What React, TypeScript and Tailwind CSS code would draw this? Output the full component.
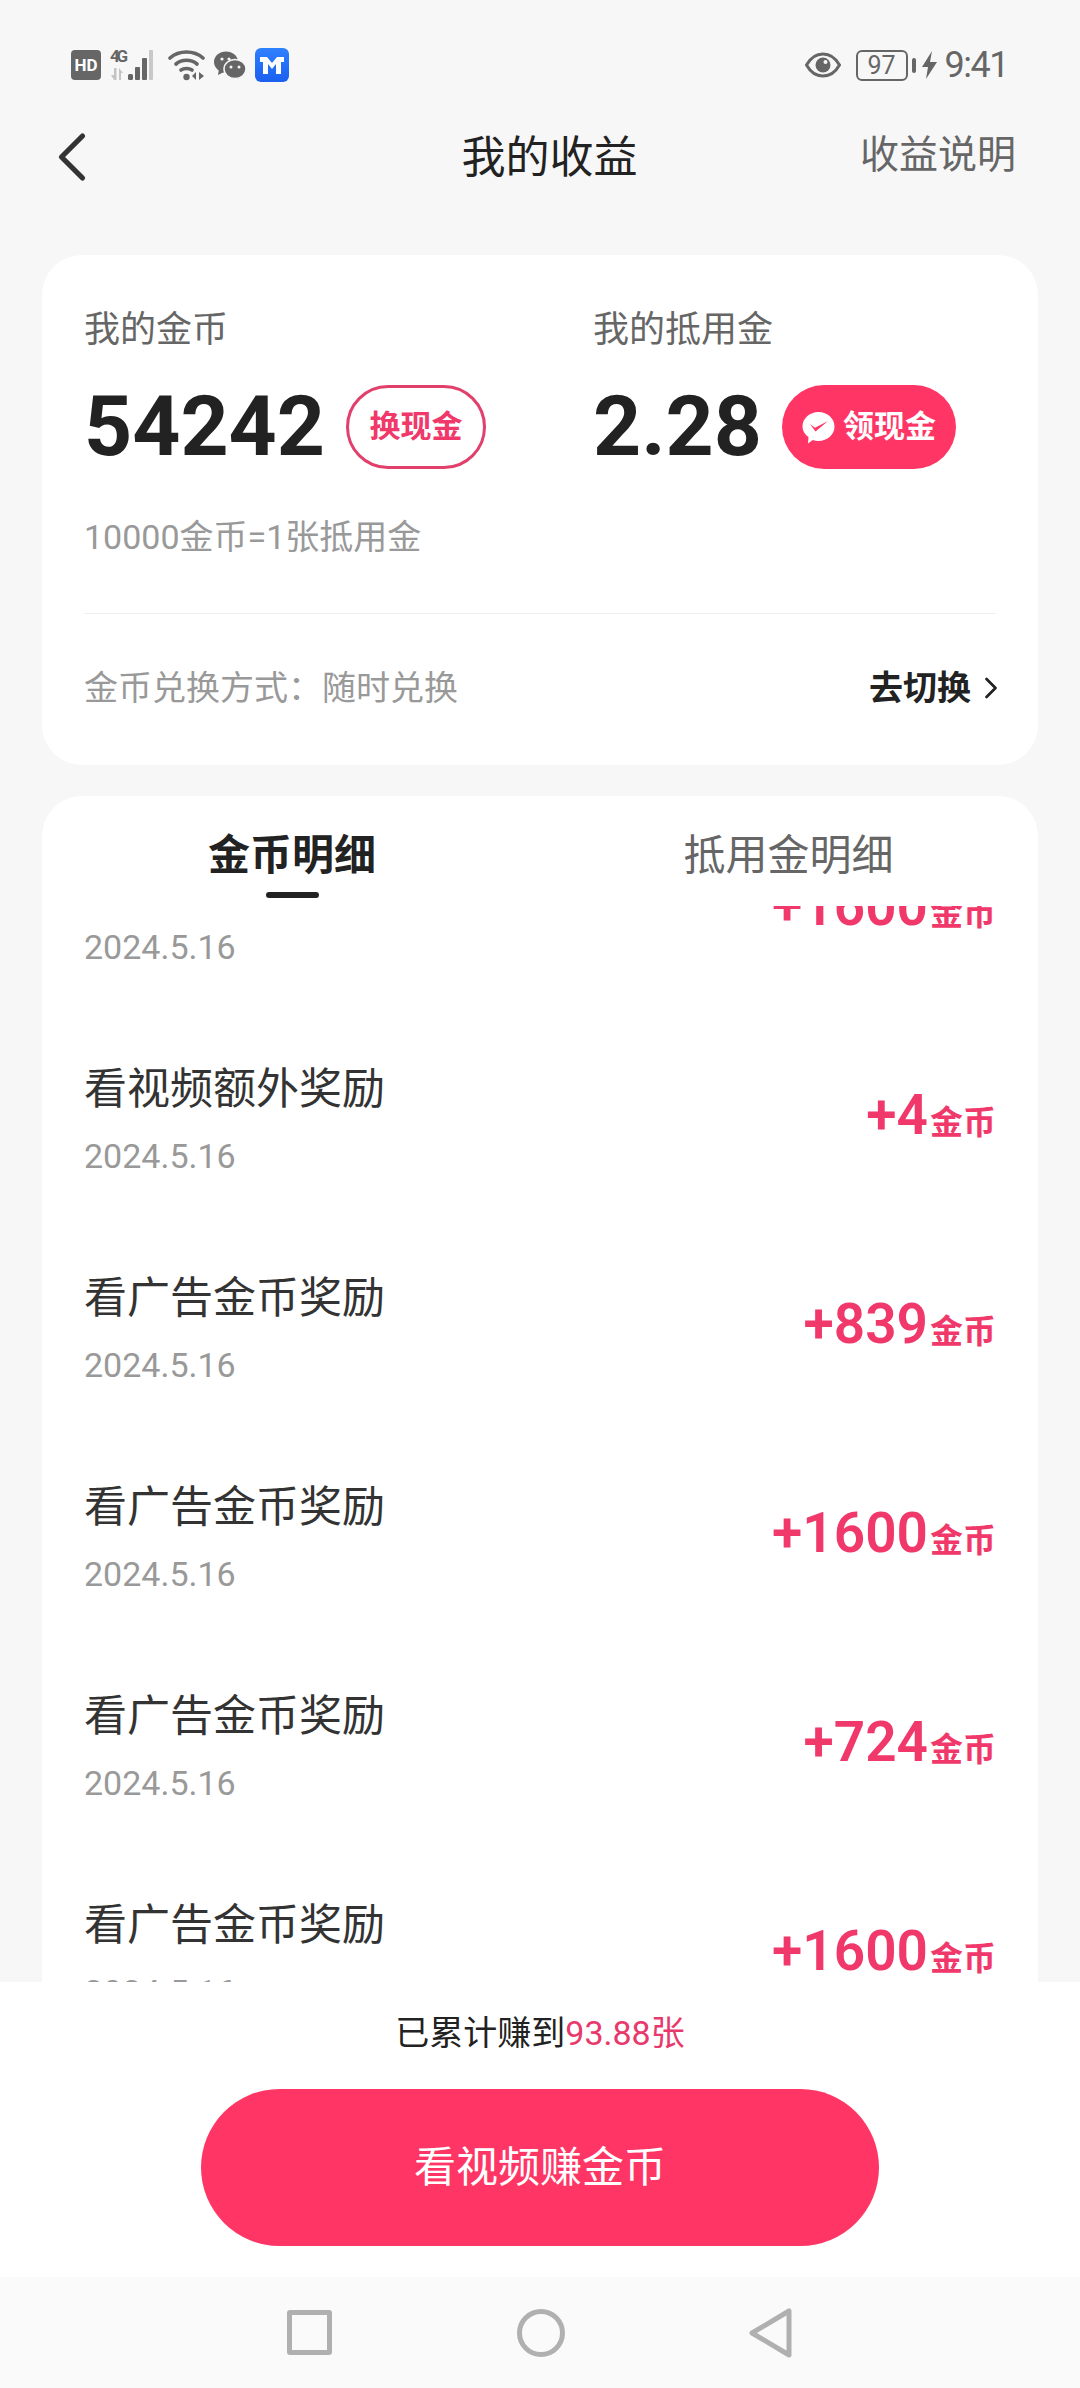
import { ChevronLeft, ChevronRight } from 'lucide-react';

const rows = [
  { title: '看广告金币奖励', date: '2024.5.16', amount: '+1600' },
  { title: '看视频额外奖励', date: '2024.5.16', amount: '+4' },
  { title: '看广告金币奖励', date: '2024.5.16', amount: '+839' },
  { title: '看广告金币奖励', date: '2024.5.16', amount: '+1600' },
  { title: '看广告金币奖励', date: '2024.5.16', amount: '+724' },
  { title: '看广告金币奖励', date: '2024.5.16', amount: '+1600' },
];

const StatusLeft = () => (
  <div className="flex items-center">
    <div className="flex h-[30px] w-[30px] items-center justify-center rounded-[4px] bg-[#666666] text-[17px] leading-none font-bold text-white">HD</div>
    <svg className="ml-[9px]" width="50" height="32" viewBox="0 0 50 32" fill="#666666">
      <text x="0" y="13" fontSize="17" fontWeight="700" fontFamily="Roboto" textLength="18">4G</text>
      <path d="M4 19h2.500v12H4l-3-5h3zM9 19l4 5h-2v7H9z" fill="#c4c4c4" />
      <rect x="18" y="25" width="5" height="6" rx="1.500" />
      <rect x="25" y="18" width="5" height="13" rx="1" />
      <rect x="32" y="9" width="5" height="22" rx="1" />
      <rect x="39" y="1" width="4" height="30" rx="1" fill="#c8c8c8" />
    </svg>
    <svg className="ml-[8px]" width="38" height="32" viewBox="0 0 38 32" fill="none" stroke="#666666" strokeWidth="3.600" strokeLinecap="round">
      <path d="M2 9C11 1 26 1 35 9" />
      <path d="M8 15c6-5 15-5 21 0" />
      <path d="M13 21c3-2 8-2 11 0" />
      <circle cx="18.500" cy="28" r="3.200" fill="#666666" stroke="none" />
      <path d="M28 23v8l-4-4zM31 23v8l5-4z" fill="#666666" stroke="none" />
    </svg>
    <svg className="ml-[8px]" width="32" height="29" viewBox="0 0 32 29">
      <ellipse cx="12" cy="11" rx="12" ry="10.500" fill="#666666" />
      <path d="M5 18l-1 6 6-3z" fill="#666666" />
      <circle cx="8" cy="8" r="1.600" fill="#f7f7f7" />
      <circle cx="15" cy="8" r="1.600" fill="#f7f7f7" />
      <ellipse cx="21" cy="18" rx="11" ry="9.500" fill="#666666" stroke="#f7f7f7" strokeWidth="1.500" />
      <circle cx="17" cy="16" r="1.500" fill="#f7f7f7" />
      <circle cx="25" cy="16" r="1.500" fill="#f7f7f7" />
    </svg>
    <div className="ml-[9px] flex h-[34px] w-[34px] items-center justify-center rounded-[6px] bg-gradient-to-b from-[#2f80ff] to-[#1c5ff0]">
      <svg width="26" height="20" viewBox="0 0 26 20" fill="white">
        <path d="M1 2h7l5 6 5-6h7v5h-3v12h-5V9l-4 5-4-5v10H4V7H1z" />
      </svg>
    </div>
  </div>
);

const StatusRight = () => (
  <div className="flex items-center">
    <svg width="36" height="28" viewBox="0 0 36 28">
      <path d="M1.500 14C6 6 11.500 3 18 3s12 3 16.500 11C30 22 24.500 25 18 25S6 22 1.500 14z" fill="none" stroke="#666666" strokeWidth="3" />
      <circle cx="18" cy="14" r="7.500" fill="#666666" />
      <circle cx="20.500" cy="11" r="2" fill="#f7f7f7" />
    </svg>
    <div className="ml-[15px] flex h-[31px] w-[52px] items-center justify-center rounded-[6px] border-[2.500px] border-[#666666] text-[25px] leading-none text-[#666666]">97</div>
    <div className="ml-[4px] h-[15px] w-[4px] rounded-[2px] bg-[#666666]" />
    <svg className="ml-[6px]" width="15" height="28" viewBox="0 0 15 28" fill="#666666">
      <path d="M10 0L0 16h6l-2 12 11-17H8z" />
    </svg>
    <span className="ml-[8px] text-[36px] leading-none tracking-[-1.500px] text-[#666666]">9:41</span>
  </div>
);

const WalletIcon = () => (
  <svg width="33" height="33" viewBox="0 0 33 33">
    <path d="M16.500 1C25.500 1 32.500 7.500 32.500 15.500S25.500 30 16.500 30c-2 0-4-.3-5.700-1L6 32.500 6.500 26C3 23.500.5 19.800.5 15.500.5 7.500 7.500 1 16.500 1z" fill="white" />
    <path d="M8 13l5 3.800L26 10l-12.500 10.500z" fill="#ff3665" />
  </svg>
);

const RecordRow = ({ title, date, amount }: { title: string; date: string; amount: string }) => (
  <div className="flex h-[209px] items-center justify-between">
    <div>
      <div className="text-[43px] leading-[50px] text-[#333333]">{title}</div>
      <div className="mt-[22px] text-[34px] leading-[40px] text-[#999999]">{date}</div>
    </div>
    <div className="mb-[8px] flex items-baseline text-[#f0386b]">
      <span className="text-[55px] leading-none font-semibold">{amount}</span>
      <span className="ml-[2px] text-[33px] leading-none font-bold">金币</span>
    </div>
  </div>
);

export default function App() {
  return (
    <div lang="zh-CN" className="flex h-[2388px] w-[1080px] flex-col overflow-hidden bg-[#f7f7f7] font-['Roboto','Noto_Sans_CJK_SC',sans-serif]">
      <div className="flex h-[130px] items-center justify-between pr-[72px] pl-[71px]">
        <StatusLeft />
        <StatusRight />
      </div>

      <div className="relative flex h-[56px] items-center justify-center pl-[19px]">
        <ChevronLeft className="absolute top-[-15px] left-[30px] h-[84px] w-[84px] text-[#333333]" strokeWidth={1.500} />
        <h1 className="text-[44px] leading-none font-normal text-[#222222]">我的收益</h1>
        <span className="absolute top-[6px] right-[64px] text-[39px] leading-none text-[#666666]">收益说明</span>
      </div>

      <div className="mx-[42px] mt-[69px] h-[510px] shrink-0 rounded-[40px] bg-white px-[42px] pt-[55px]">
        <div className="flex">
          <div className="w-[509px]">
            <div className="text-[36px] leading-[40px] text-[#666666]">我的金币</div>
            <div className="mt-[35px] flex h-[84px] items-center">
              <span className="text-[84px] leading-none font-bold text-[#222222]">54242</span>
              <span className="ml-[21px] flex h-[84px] w-[140px] items-center justify-center rounded-full border-[3px] border-[#e0406b] text-[31px] font-bold text-[#f0386b]">换现金</span>
            </div>
          </div>
          <div>
            <div className="text-[36px] leading-[40px] text-[#666666]">我的抵用金</div>
            <div className="mt-[35px] flex h-[84px] items-center">
              <span className="text-[84px] leading-none font-bold text-[#222222]">2.28</span>
              <span className="ml-[20px] flex h-[84px] w-[174px] items-center justify-center gap-[8px] rounded-full bg-[#ff3665] text-[31px] font-bold text-white">
                <WalletIcon />
                领现金
              </span>
            </div>
          </div>
        </div>
        <div className="mt-[48px] text-[34px] leading-[40px] text-[#999999]">10000金币=1张抵用金</div>
        <div className="mt-[56px] h-px bg-[#eeeeee]" />
        <div className="mt-[54px] flex items-center justify-between">
          <span className="text-[34px] leading-[40px] text-[#999999]">金币兑换方式：随时兑换</span>
          <span className="flex items-center text-[34px] leading-[40px] font-bold text-[#222222]">
            去切换
            <ChevronRight className="mr-[-13px] ml-[2px] h-[36px] w-[36px]" strokeWidth={1.800} />
          </span>
        </div>
      </div>

      <div className="mx-[42px] mt-[31px] flex min-h-0 flex-1 flex-col overflow-hidden rounded-t-[40px] bg-white">
        <div className="flex h-[110px] shrink-0 items-start pt-[35px]">
          <div className="flex w-[500px] flex-col items-center">
            <span className="text-[42px] leading-[50px] font-bold text-[#222222]">金币明细</span>
            <span className="mt-[11px] h-[6px] w-[53px] rounded-full bg-[#222222]" />
          </div>
          <div className="flex w-[493px] justify-center">
            <span className="text-[42px] leading-[50px] text-[#666666]">抵用金明细</span>
          </div>
        </div>
        <div className="min-h-0 flex-1 overflow-hidden px-[42px]">
          <div className="mt-[-100px]">
            {rows.map((row, index) => (
              <RecordRow key={index} {...row} />
            ))}
          </div>
        </div>
      </div>

      <div className="flex h-[295px] shrink-0 flex-col items-center bg-white pt-[31px]">
        <div className="text-[34px] leading-[40px] text-[#222222]">
          已累计赚到<span className="text-[#e8396c]">93.88张</span>
        </div>
        <button className="mt-[36px] h-[157px] w-[678px] rounded-full bg-[#ff3665] text-[42px] text-white">看视频赚金币</button>
      </div>

      <div className="flex h-[111px] shrink-0 items-center justify-center bg-[#fafafa]">
        <div className="flex items-center">
          <div className="h-[45px] w-[45px] rounded-[3px] border-[5px] border-[#b0b0b0]" />
          <div className="ml-[185px] h-[48px] w-[48px] rounded-full border-[5px] border-[#b0b0b0]" />
          <svg className="ml-[184px]" width="44" height="50" viewBox="0 0 44 50" fill="none" stroke="#b0b0b0" strokeWidth="5" strokeLinejoin="round">
            <path d="M40 3v44L3 25z" />
          </svg>
        </div>
      </div>
    </div>
  );
}
